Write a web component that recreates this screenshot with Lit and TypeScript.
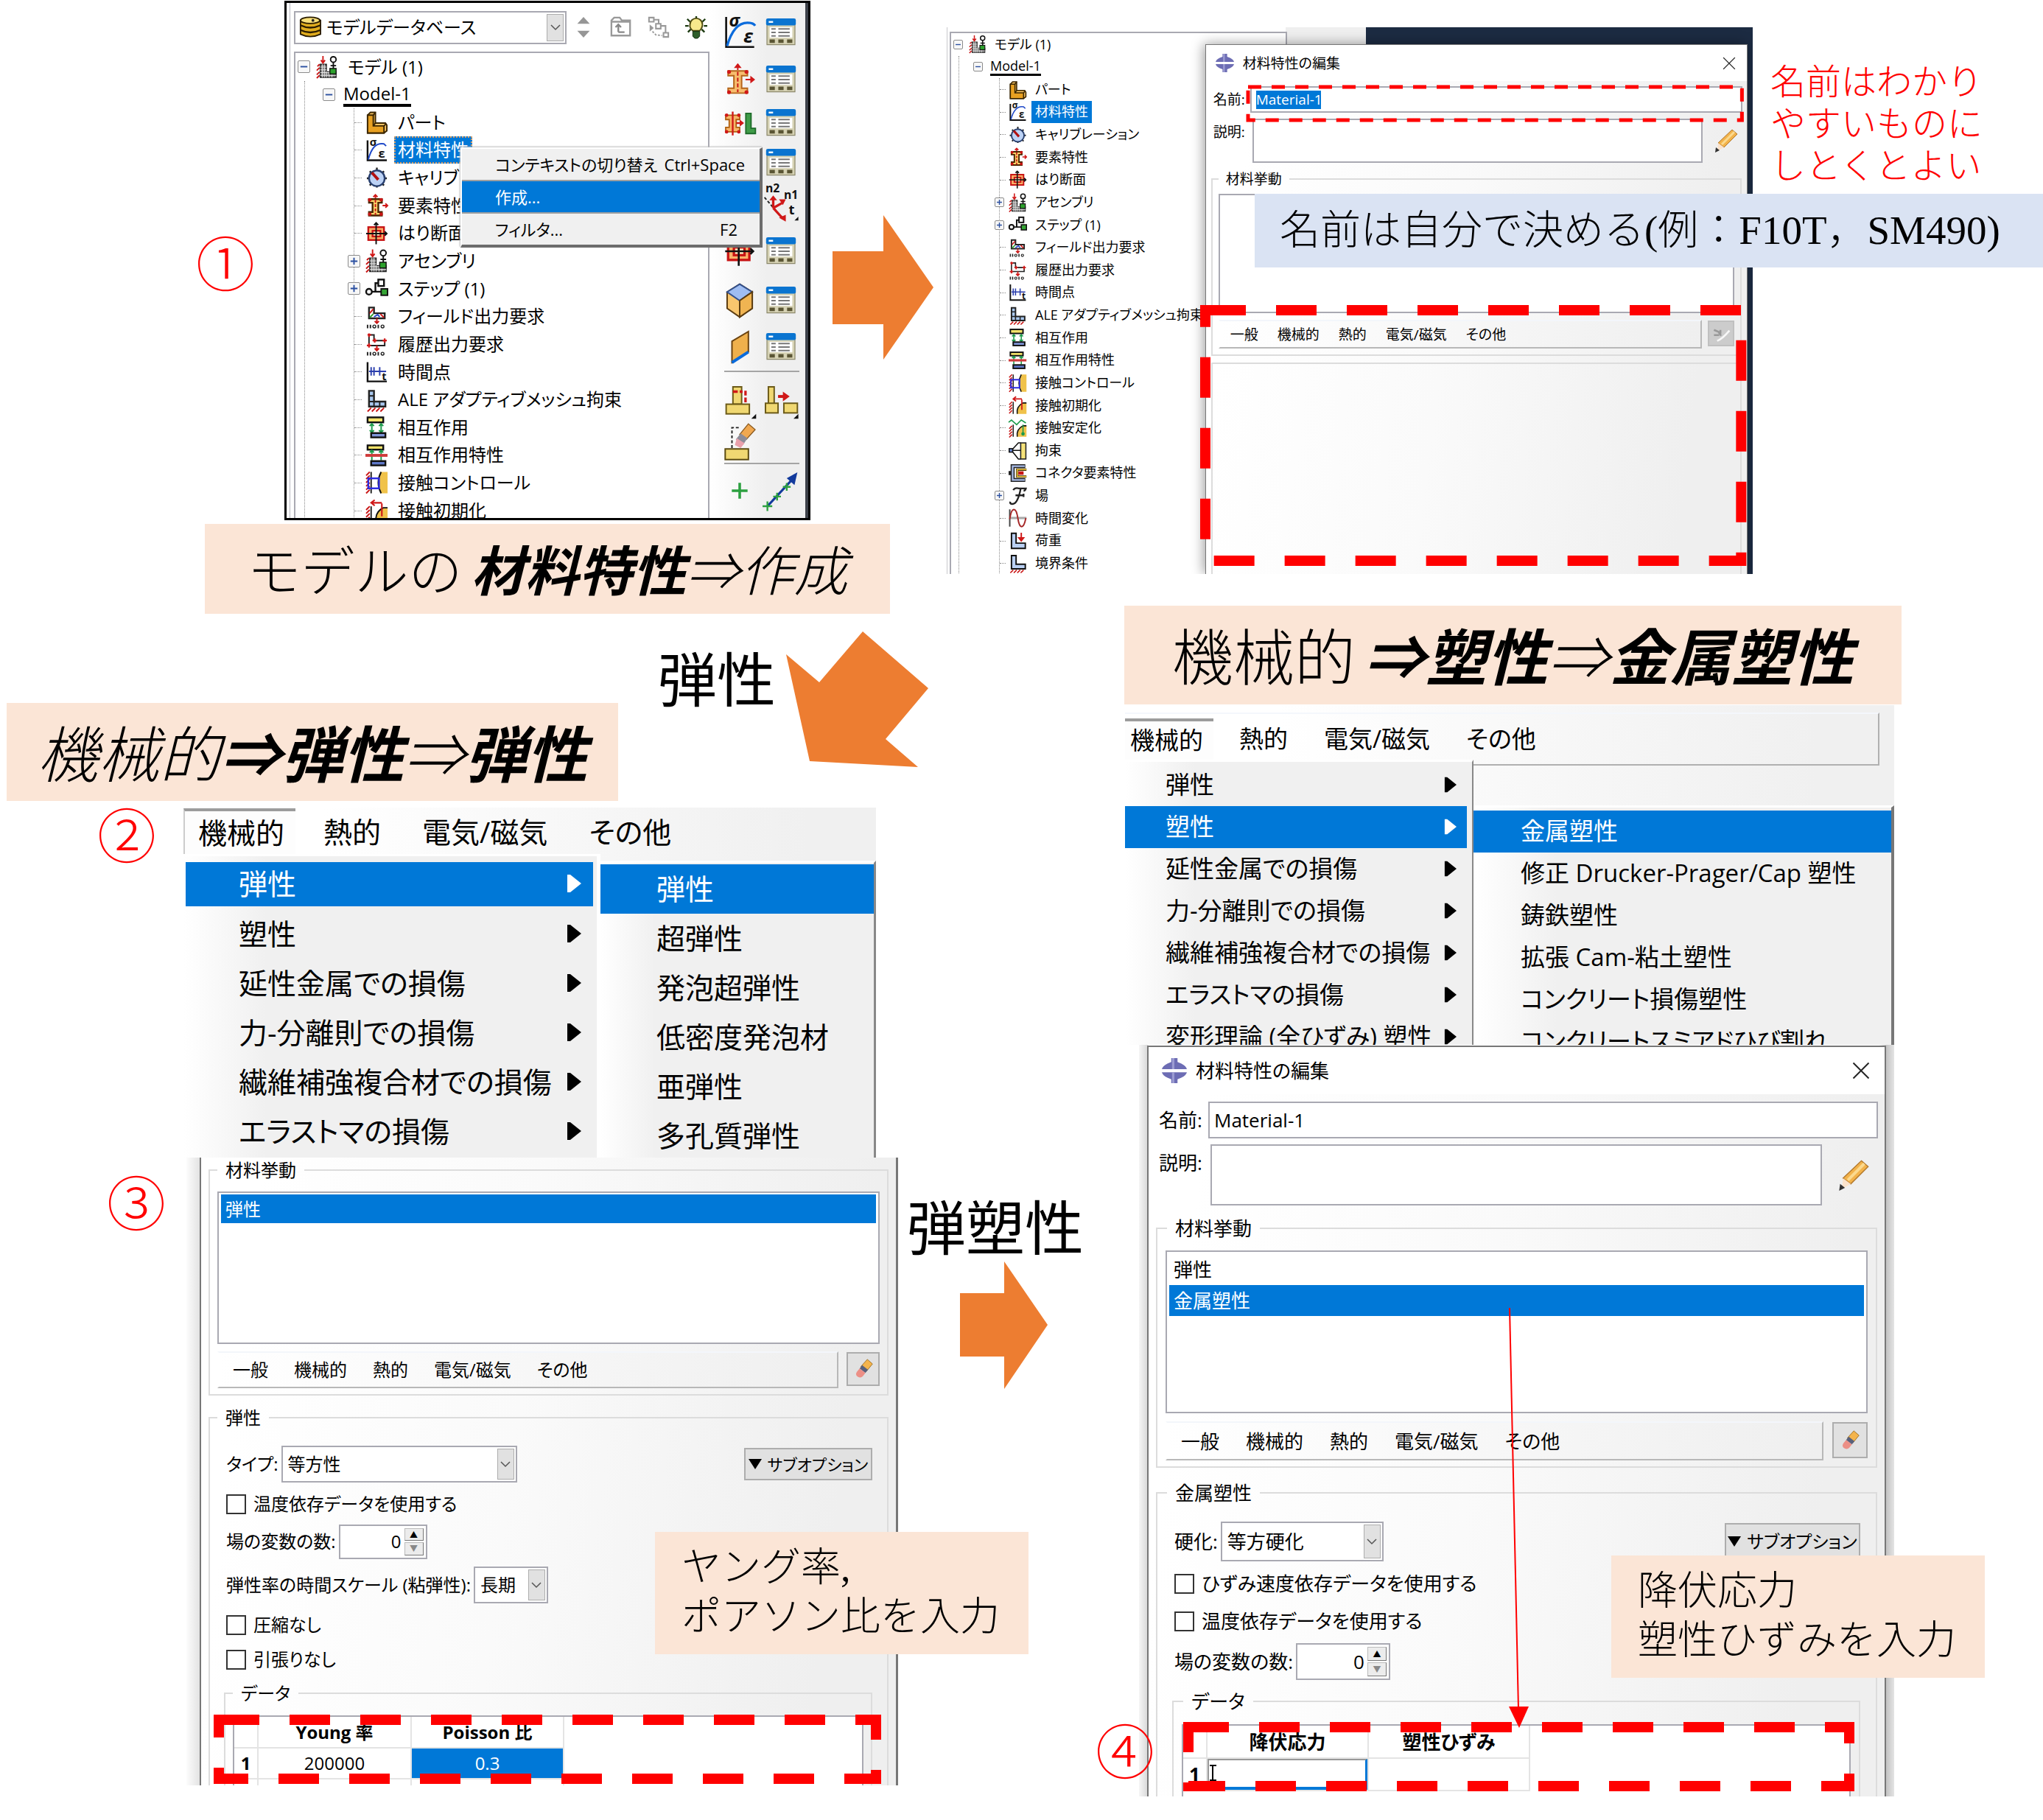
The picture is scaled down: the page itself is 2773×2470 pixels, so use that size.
import { LitElement, html, svg, css, nothing, TemplateResult } from "lit";
import { customElement } from "lit/decorators.js";
import { classMap } from "lit/directives/class-map.js";

type Drawing = TemplateResult<2>;

const hatch = (x: number, y0: number, y1: number): Drawing => {
  const out: Drawing[] = [];
  for (let y = y0; y < y1; y += 5) {
    out.push(svg`<path d="M${x} ${y + 5}l5 -5" stroke="#c81414" stroke-width="2"/>`);
  }
  return svg`${out}`;
};

const bits = svg`<path d="M3 27v5M7 27v5M18 27v5" stroke="#222" stroke-width="2"/>
  <circle cx="12.500" cy="29.500" r="2" fill="none" stroke="#222" stroke-width="1.500"/>
  <circle cx="24" cy="29.500" r="2" fill="none" stroke="#222" stroke-width="1.500"/>`;

const DRAWINGS: Record<string, Drawing> = {
  model: svg`
    <path d="M6 12h9v11h14v8H6z" fill="#777" stroke="#222" stroke-width="1.500"/>
    <path d="M9 12v19M12 12v19M15 22v9M19 23v8M23 23v8M6 16h9M6 20h9M6 24h23M6 28h23" stroke="#e8e8e8" stroke-width="1"/>
    <path d="M2 15l3 -3M1 21l4 -4M1 27l4 -4M1 32l4 -4" stroke="#c81414" stroke-width="2"/>
    <path d="M10 0v9M7 6l3 4l3 -4" fill="none" stroke="#d01818" stroke-width="2"/>
    <circle cx="25" cy="5" r="4" fill="#fff" stroke="#111" stroke-width="2"/>
    <path d="M25 9v9M21 14h8" stroke="#111" stroke-width="2"/>
    <rect x="20" y="18" width="9" height="8" fill="#2ca02c" stroke="#111" stroke-width="1.500"/>`,
  part: svg`
    <path d="M3 6l4 -4h7v15h14l2 3v8l-4 3H3z" fill="#f6c463" stroke="#3a2500" stroke-width="2"/>
    <path d="M3 6h8v15h15v10H3z" fill="#e8a021" stroke="#3a2500" stroke-width="2"/>
    <path d="M11 6l3 -4M11 21l3 -4M26 21l3 -3" stroke="#3a2500" stroke-width="2"/>`,
  material: svg`
    <path d="M3 2v28h27" fill="none" stroke="#111" stroke-width="2.500"/>
    <path d="M4 29C8 14 14 5 26 7l3 3" fill="none" stroke="#1e48c8" stroke-width="2"/>
    <text x="6" y="10" font-size="15" font-weight="700" fill="#111">σ</text>
    <text x="18" y="26" font-size="17" font-weight="700" fill="#111">ε</text>`,
  calibration: svg`
    <path d="M16 2v28M2 17h28M6 7l20 20M26 7L6 27" stroke="#222" stroke-width="2.500"/>
    <circle cx="16" cy="17" r="11" fill="#bcd2f5" stroke="#29406f" stroke-width="2.500"/>
    <path d="M9 9l9 10" stroke="#b01010" stroke-width="4"/>`,
  section: svg`
    <path d="M14 1v6M11 4l3 -3l3 3M24 16h7M28 13l3 3l-3 3" fill="none" stroke="#d01818" stroke-width="2"/>
    <path d="M5 7h18v5h-5v13h5v5H5v-5h5V12H5z" fill="#fbd36a" stroke="#4a2500" stroke-width="2.500"/>
    <path d="M14 8v21" stroke="#c81414" stroke-width="2" stroke-dasharray="4 2"/>
    <circle cx="6" cy="8" r="2.500" fill="#c81414"/><circle cx="22" cy="8" r="2.500" fill="#c81414"/>
    <circle cx="6" cy="28" r="2.500" fill="#c81414"/><circle cx="22" cy="28" r="2.500" fill="#c81414"/>`,
  bigSection: svg`
    <path d="M14 0v6M22 16h7" fill="none" stroke="#d01818" stroke-width="1.500"/><path d="M10 4l4 -5l4 5zM27 12l5 4l-5 4z" fill="#d01818"/>
    <path d="M4 7h20v5h-6v13h6v5H4v-5h6V12H4z" fill="#f7bd6e" stroke="#b5651a" stroke-width="1.500"/>
    <path d="M14 8v21" stroke="#c81414" stroke-width="1.500" stroke-dasharray="4 2"/>
    <circle cx="5" cy="8" r="2" fill="#d01818"/><circle cx="23" cy="8" r="2" fill="#d01818"/>
    <circle cx="5" cy="29" r="2" fill="#d01818"/><circle cx="23" cy="29" r="2" fill="#d01818"/>`,
  profile: svg`
    <rect x="4" y="7" width="22" height="18" fill="#fbb26a" stroke="#c81414" stroke-width="2.500"/>
    <rect x="10" y="12" width="11" height="8" fill="#fff3c8" stroke="#c81414" stroke-width="2.500"/>
    <path d="M15 1v30M1 16h29M12 4l3 -3l3 3M27 13l3 3l-3 3" fill="none" stroke="#111" stroke-width="2"/>`,
  step: svg`
    <rect x="18" y="3" width="8" height="9" fill="#fff" stroke="#111" stroke-width="2.500"/>
    <circle cx="5" cy="20" r="4" fill="#fff" stroke="#111" stroke-width="2.500"/>
    <path d="M9 20h13M14 20V8h4" fill="none" stroke="#111" stroke-width="2.500"/>
    <rect x="22" y="16" width="9" height="9" fill="#35a535" stroke="#111" stroke-width="2"/>`,
  field: svg`
    <path d="M5 3h7v8h15v7H5z" fill="#fff" stroke="#222" stroke-width="2.500"/>
    <path d="M6 11l5 -6M21 12l5 5" stroke="#d01818" stroke-width="2"/>
    <path d="M6 17l5 -5" stroke="#2ca02c" stroke-width="2"/><path d="M12 16l5 -3l3 3" fill="none" stroke="#2244cc" stroke-width="2"/>
    <path d="M16 18v7M13 22l3 3l3 -3" fill="none" stroke="#c81414" stroke-width="2"/>${bits}`,
  history: svg`
    <path d="M5 3h7v8h15v7H5z" fill="#fff" stroke="#222" stroke-width="2"/>
    <path d="M3 3h5M5 1v5M2 18h6M5 15v6M10 11h6M13 8v6M24 11h6M27 8v6M16 18v7M13 22l3 3l3 -3" fill="none" stroke="#d01818" stroke-width="2.200"/>${bits}`,
  timepoint: svg`
    <path d="M3 2v27h27" fill="none" stroke="#111" stroke-width="2.500"/>
    <path d="M5 15h24M8 9v12M12 9v12M20 9v12" stroke="#2b3fae" stroke-width="2"/>
    <text x="23" y="27" font-size="15" font-weight="700" fill="#111">t</text>`,
  ale: svg`
    <path d="M5 3h7v15h16v7H5z" fill="#a9c8ef" stroke="#222" stroke-width="2.500"/>
    <path d="M5 10h7M5 18h7v7M20 18v7" fill="none" stroke="#222" stroke-width="2"/>
    <path d="M3 32l5 -5M9 32l5 -5M15 32l5 -5M21 32l5 -5" stroke="#c81414" stroke-width="2"/>`,
  interaction: svg`
    <rect x="3" y="2" width="22" height="7" fill="#f4e36a" stroke="#111" stroke-width="2.500"/>
    <path d="M9 10v13M22 10v13M6 14l3 -3l3 3M6 20l3 3l3 -3M19 14l3 -3l3 3M19 20l3 3l3 -3" fill="none" stroke="#1b9a4a" stroke-width="2"/>
    <rect x="8" y="24" width="20" height="6" fill="#7f95d8" stroke="#111" stroke-width="2.500"/>`,
  interactionProp: svg`
    <rect x="3" y="2" width="22" height="6" fill="#f4e36a" stroke="#111" stroke-width="2.500"/>
    <path d="M9 9v14M22 9v14M6 12l3 -3l3 3M19 12l3 -3l3 3" fill="none" stroke="#1b9a4a" stroke-width="2"/>
    <path d="M0 16h31" stroke="#cf3a3a" stroke-width="4"/>
    <rect x="8" y="24" width="20" height="6" fill="#5f78c8" stroke="#111" stroke-width="2.500"/>`,
  contactControl: svg`
    ${hatch(1, 1, 30)}<path d="M8 1v30" stroke="#222" stroke-width="2"/>
    <path d="M31 1h-9q-7 15 0 30h9z" fill="#f0c24a"/><path d="M22 1q-8 15 0 30" fill="none" stroke="#111" stroke-width="2"/>
    <rect x="4" y="10" width="15" height="14" fill="none" stroke="#2a2ae0" stroke-width="2.500"/>`,
  contactInit: svg`
    ${hatch(1, 10, 30)}<path d="M8 10v21" stroke="#222" stroke-width="2"/>
    <path d="M31 12h-9q-8 8 -8 19h17z" fill="#f0c24a"/><path d="M31 12h-6q-12 6 -10 19" fill="none" stroke="#111" stroke-width="2"/>
    <path d="M23 6v18M23 5H9M13 1L8 5l5 4" fill="none" stroke="#d01818" stroke-width="2.200"/>`,
  contactStab: svg`
    ${hatch(1, 12, 30)}<path d="M8 10v21" stroke="#222" stroke-width="2"/>
    <path d="M31 12h-9q-8 8 -8 19h17z" fill="#f0c24a"/><path d="M31 12h-6q-12 6 -10 19" fill="none" stroke="#111" stroke-width="2"/>
    <path d="M0 6l5 -4l9 8l8 -8l8 5M25 10v17" fill="none" stroke="#1b9a4a" stroke-width="2"/><circle cx="25" cy="26" r="3" fill="#1b9a4a"/>`,
  constraint: svg`
    <rect x="21" y="2" width="9" height="28" fill="#f6e27a" stroke="#222" stroke-width="2"/>
    <path d="M21 2h-4L5 15l12 15h4M6 15h15" fill="none" stroke="#111" stroke-width="2"/>
    <rect x="1" y="12" width="6" height="6" fill="#6f8fe0" stroke="#111" stroke-width="2"/>`,
  connector: svg`
    <path d="M29 4H7v24h22M8 16H0" fill="none" stroke="#222" stroke-width="7"/>
    <path d="M28 4H7v24h21" fill="none" stroke="#a9bce8" stroke-width="3"/>
    <path d="M31 10H15v12h16" fill="none" stroke="#3a2b00" stroke-width="4"/><path d="M31 10H15v12h16" fill="none" stroke="#f2c53a" stroke-width="2"/>
    <rect x="17" y="13" width="9" height="6" fill="#c81414"/>`,
  fieldF: svg`<path d="M8 6q3 -5 10 -3l12 0q-1 4 -4 4M21 3q-2 12 -6 20q-4 8 -10 7q-3 -1 -2 -4M12 15h14M26 12v6" fill="none" stroke="#222" stroke-width="3"/>`,
  amplitude: svg`
    <path d="M2 1v30" stroke="#444" stroke-width="2.500"/><path d="M2 16h29" stroke="#aaa" stroke-width="4"/>
    <path d="M2 18C5 -4 13 -4 16 16s10 20 14 0" fill="none" stroke="#a52626" stroke-width="2.500"/>`,
  load: svg`
    <path d="M5 3h8v17h16v9H5z" fill="#b9d0f3" stroke="#111" stroke-width="2.500"/>
    <path d="M22 2v14M18 11l4 5l4 -5z" fill="#d01818" stroke="#d01818" stroke-width="2.500"/>`,
  boundary: svg`
    <path d="M5 2h8v15h16v8H5z" fill="#b9d0f3" stroke="#111" stroke-width="2.500"/>
    <path d="M3 32l5 -5M9 32l5 -5M15 32l5 -5M21 32l5 -5" stroke="#c81414" stroke-width="2"/>`,
  database: svg`
    <path d="M2 6q14 -7 29 0v20q-15 7 -29 0z" fill="#e0ac1e" stroke="#2a1c00" stroke-width="2"/>
    <ellipse cx="16" cy="6" rx="14" ry="4.500" fill="#f7df7a" stroke="#2a1c00" stroke-width="2"/>
    <path d="M2 13q14 7 29 0M2 20q14 7 29 0" fill="none" stroke="#2a1c00" stroke-width="2.500"/><circle cx="20" cy="6" r="2" fill="#222"/>`,
  updown: svg`<path d="M16 1l9 10H7zM16 31l9 -10H7z" fill="#969696"/>`,
  folder: svg`<path d="M2 10V6l4 -4h8l3 4h12v22H2zM2 8h27" fill="none" stroke="#999" stroke-width="2.500"/>
    <path d="M12 23V13M8 16l4 -4l4 4M12 23h9" fill="none" stroke="#888" stroke-width="2.500"/>`,
  branch: svg`<path d="M2 2h7v6H2zM12 11h7v7h-7zM23 24h7v6h-7zM9 5h7v6M19 14h7v10" fill="none" stroke="#999" stroke-width="2.200"/>
    <path d="M3 12v10l6 -5z" fill="#999"/><path d="M7 22l5 5l9 1" fill="none" stroke="#999" stroke-width="2" stroke-dasharray="3 2"/>`,
  bulb: svg`<path d="M16 0v4M3 4l4 4M29 4l-4 4M0 14h5M27 14h5M4 23l4 -4M28 23l-4 -4" stroke="#1d3b12" stroke-width="2.500"/>
    <path d="M11 21q-5 -4 -4 -9a9 9 0 0 1 18 0q0 5 -4 9z" fill="#f7e98c" stroke="#4d4a10" stroke-width="2"/>
    <path d="M11 22h10v7l-3 3h-4l-3 -3z" fill="#2f5f2c" stroke="#122c10" stroke-width="1"/>`,
  manager: svg`<rect x="0" y="2" width="32" height="28" fill="#d6d2b4" stroke="#8a8668" stroke-width="1"/>
    <rect x="-1" y="0" width="34" height="8" rx="2" fill="#0a74d0"/><rect x="2" y="3" width="5" height="2" fill="#fff"/>
    <rect x="3" y="10" width="26" height="12" fill="#fff"/>
    <path d="M5 12h5M5 16h5M5 20h5M13 12h13M13 16h13M13 20h13" stroke="#777" stroke-width="1.500"/>
    <path d="M3 26h6M13 26h6M23 26h6" stroke="#5a5534" stroke-width="4"/>`,
  bigMaterial: svg`<path d="M2 0v31h29" fill="none" stroke="#111" stroke-width="2"/>
    <path d="M3 30C7 16 14 6 24 6q6 0 8 3" fill="none" stroke="#0a6bdc" stroke-width="2.500"/>
    <text x="5" y="10" font-size="18" font-style="italic" font-weight="700" fill="#111">σ</text>
    <text x="20" y="27" font-size="19" font-style="italic" font-weight="700" fill="#111">ε</text>`,
  beamPair: svg`<path d="M0 7h16v5h-4v9h4v5H0v-5h4v-9H0z" fill="#f7b569" stroke="#b06010" stroke-width="1.500"/>
    <path d="M8 3v27M12 16h6" stroke="#d01818" stroke-width="2"/><path d="M16 12l5 4l-5 4z" fill="#d01818"/>
    <circle cx="1" cy="7" r="2" fill="#d01818"/><circle cx="15" cy="7" r="2" fill="#d01818"/><circle cx="1" cy="26" r="2" fill="#d01818"/><circle cx="15" cy="26" r="2" fill="#d01818"/>
    <path d="M23 5h6v17h5v6H23z" fill="#3f9c48" stroke="#1d6a28" stroke-width="1.500"/>`,
  axes: svg`<path d="M-1 9l18 21" stroke="#222" stroke-width="1.500" stroke-dasharray="3 2"/>
    <path d="M8 20V10M8 20l9 -5M8 20l10 11" stroke="#d01818" stroke-width="2.500"/>
    <path d="M4 12l4 -5l4 5zM14 11l7 0l-3 6zM14 30l7 -3v7z" fill="#d01818"/>
    <text x="0" y="4" font-size="12" font-weight="700" fill="#111">n2</text><text x="19" y="11" font-size="12" font-weight="700" fill="#111">n1</text>
    <text x="24" y="27" font-size="14" font-weight="700" fill="#111">t</text><path d="M34 29v4h-4z" fill="#111"/>`,
  solid: svg`<path d="M16 -1l13 8v17l-13 9l-13 -9V7z" fill="#f8c66e" stroke="#5a3b10" stroke-width="1.500"/>
    <path d="M16 -1l13 8l-13 9L3 7z" fill="#9fbdf2" stroke="#33508c" stroke-width="1.500"/><path d="M16 16v17l13 -9V7z" fill="#f0b452" stroke="#5a3b10" stroke-width="1.500"/>`,
  shell: svg`<path d="M8 10L25 0v21L8 32z" fill="#efb04c" stroke="#6b4310" stroke-width="1.500"/><path d="M8 32l17 -11" stroke="#0a6bdc" stroke-width="3"/>`,
  partition: svg`<path d="M9 3h9v18H9z" fill="#f0d872" stroke="#6b5a18" stroke-width="1.500"/><rect x="2" y="21" width="24" height="10" fill="#f0d872" stroke="#6b5a18" stroke-width="1.500"/>
    <path d="M9 8h10M22 7v13" stroke="#d01818" stroke-width="2.500" stroke-dasharray="5 2"/><path d="M33 31v5h-5z" fill="#111"/>`,
  split: svg`<path d="M3 3h6v18H3z" fill="#f0d872" stroke="#6b5a18" stroke-width="1.500"/><rect x="0" y="20" width="13" height="10" fill="#f0d872" stroke="#6b5a18" stroke-width="1.500"/>
    <rect x="19" y="20" width="14" height="10" fill="#f0d872" stroke="#6b5a18" stroke-width="1.500"/><path d="M13 13h7" stroke="#d01818" stroke-width="3"/><path d="M18 8l7 5l-7 5z" fill="#d01818"/><path d="M34 31v5h-5z" fill="#111"/>`,
  erasePart: svg`<rect x="1" y="20" width="24" height="11" fill="#f0d872" stroke="#5a4a10" stroke-width="1.500"/><path d="M8 19V-2h8" fill="none" stroke="#222" stroke-width="1.500" stroke-dasharray="3 2"/>
    <path d="M25 -6l7 6l-9 10l-7 -5z" fill="#f0a850" stroke="#8a5a20" stroke-width="1"/><path d="M17 4l7 5l-4 6l-8 -5z" fill="#8c8c98"/><path d="M13 9l8 5l-4 5l-6 -3z" fill="#e9a0ac"/>`,
  plus: svg`<path d="M16 7v18M7 16h18" stroke="#2ca040" stroke-width="3"/>`,
  line: svg`<path d="M2 32L28 4" stroke="#123a9c" stroke-width="2.500"/><path d="M22 3l11 -6l-3 13z" fill="#123a9c"/>
    <path d="M-3 32h10M2 27v10M8 22h8M12 18v8M18 12h8M22 8v8" stroke="#2ca040" stroke-width="1.800"/>`,
  app: svg`<path d="M12 0h8v5l5 2q6 3 7 7H0q1 -4 7 -7l5 -2z" fill="#6d6db4"/><path d="M12 32h8v-5l5 -2q6 -3 7 -7H0q1 4 7 7l5 2z" fill="#6d6db4"/>
    <path d="M13 0h3v14h-3zM13 18h3v14h-3z" fill="#9c9cd2"/>`,
  pencil: svg`<path d="M24 1l7 6L13 25l-8 -6z" fill="#f2b24a" stroke="#b0762a" stroke-width="1"/><path d="M27 4L10 21" stroke="#fbd98e" stroke-width="3"/>
    <path d="M5 19l8 6l-9 5z" fill="#fbe3cc"/><path d="M2 25l5 4l-6 3z" fill="#333"/>`,
  eraser: svg`<path d="M22 1l8 7l-9 11l-9 -7z" fill="#f4b44c" stroke="#9a6a1c" stroke-width="1"/><path d="M14 10l9 7l-4 5l-9 -7z" fill="#59617c"/><path d="M10 15l9 7l-4 5q-4 4 -9 0q-3 -3 0 -7z" fill="#ec8f86"/>`,
  eraserOff: svg`<path d="M5 10l7 3l4 6M5 18h8M15 10v6" fill="none" stroke="#999" stroke-width="3"/><path d="M10 27q8 -3 19 -16" fill="none" stroke="#f8f8f8" stroke-width="3"/>`,
  close: svg`<path d="M2 2l28 28M30 2L2 30" stroke="#222" stroke-width="2.500"/>`,
  chevron: svg`<path d="M4 10l12 12l12 -12" fill="none" stroke="#555" stroke-width="3"/>`,
};

const icon = (name: string, cls = "icon") =>
  html`<svg class=${cls} viewBox="0 0 32 32" aria-hidden="true">${DRAWINGS[name]}</svg>`;

interface TreeItem { label: string; icon: string; expandable?: boolean; selected?: boolean }

const CHILDREN: TreeItem[] = [
  { label: "パート", icon: "part" },
  { label: "材料特性", icon: "material", selected: true },
  { label: "キャリブレーション", icon: "calibration" },
  { label: "要素特性", icon: "section" },
  { label: "はり断面", icon: "profile" },
  { label: "アセンブリ", icon: "model", expandable: true },
  { label: "ステップ (1)", icon: "step", expandable: true },
  { label: "フィールド出力要求", icon: "field" },
  { label: "履歴出力要求", icon: "history" },
  { label: "時間点", icon: "timepoint" },
  { label: "ALE アダプティブメッシュ拘束", icon: "ale" },
  { label: "相互作用", icon: "interaction" },
  { label: "相互作用特性", icon: "interactionProp" },
  { label: "接触コントロール", icon: "contactControl" },
  { label: "接触初期化", icon: "contactInit" },
  { label: "接触安定化", icon: "contactStab" },
  { label: "拘束", icon: "constraint" },
  { label: "コネクタ要素特性", icon: "connector" },
  { label: "場", icon: "fieldF", expandable: true },
  { label: "時間変化", icon: "amplitude" },
  { label: "荷重", icon: "load" },
  { label: "境界条件", icon: "boundary" },
];

const TOOLS: string[][] = [
  ["bigMaterial", "manager"], ["bigSection", "manager"], ["beamPair", "manager"], ["", "manager"],
  ["", "axes"], ["profile", "manager"], ["solid", "manager"], ["shell", "manager"],
];

const CATEGORIES = ["一般", "機械的", "熱的", "電気/磁気", "その他"];

@customElement("app-root")
export class AppRoot extends LitElement {
  static styles = css`
    :host { display: block; background: #fff; color: #000; }
    * { box-sizing: border-box; }
    ul { list-style: none; margin: 0; padding: 0; }
    figure { margin: 0; }
    button, input, select, textarea { font: inherit; color: inherit; margin: 0; border-radius: 0; }
    button { border: 0; background: none; padding: 0; }
    svg { display: block; flex: none; }

    .board { display: grid; grid-template-columns: 1285fr 1488fr; min-height: 2470px; position: relative; overflow: hidden; }
    .col { display: flex; flex-direction: column; position: relative; min-width: 0; }
    .shot {
      font-family: "Open Sans", "Noto Sans CJK JP", sans-serif;
      font-feature-settings: "palt";
      white-space: nowrap;
      position: relative; font-size: var(--fs); line-height: var(--lh);
    }
    .clip { overflow: hidden; }

    /* captions and notes */
    .mincho { font-family: "Liberation Serif", "Noto Sans CJK JP", serif; font-weight: 300; white-space: nowrap; }
    .caption { background: #fbe5d6; margin: 0; display: flex; align-items: center; justify-content: center; font-family: "Noto Sans CJK JP", sans-serif; font-weight: 300; padding-bottom: 4px; }
    .caption em { font-style: italic; }
    .caption strong { font-style: italic; font-weight: 700; }
    .caption span { margin-right: 12px; }
    .note { position: absolute; margin: 0; background: #fbe5d6; padding: 16px 36px; font-size: 54px; line-height: 67px; }
    .blue { position: absolute; left: calc(100% * 418 / 1488); right: 0; top: 263px; height: 100px; margin: 0; padding: 0 34px; background: #dae3f3; font-size: 55px; line-height: 100px; z-index: 3; }
    .red { position: absolute; left: calc(100% * 1118 / 1488); top: 83px; margin: 0; color: #f00; font-size: 48px; line-height: 57px; }
    .label { position: absolute; margin: 0; font-family: "Noto Sans CJK JP", sans-serif; font-size: 80px; line-height: 96px; white-space: nowrap; }
    .num { position: absolute; color: #f00; font-family: "Noto Sans CJK JP", sans-serif; font-weight: 300; font-size: 80px; line-height: 80px; z-index: 4; }
    .arrow { position: absolute; fill: #ed7d31; }
    .dash { position: absolute; overflow: visible; pointer-events: none; z-index: 2; fill: none; stroke: #f00; stroke-width: 14px; stroke-dasharray: 55 41; }
    .dash.thin { stroke-width: 5px; stroke-dasharray: 18 14; }

    /* model database window */
    .fig1 { --fs: 24px; --lh: 30px; --row: calc(640px / 17); --exp: 17px; --ico: 31px; --line1: 12px; --line2: 66px; --slot: 15px; --conn: 10px; --gap: 8px; --pad1: 24px; --gap1: 6px;
      margin: 1px 0 0 calc(100% * 386 / 1285); width: calc(100% * 714 / 1285); height: 705px; border: 3px solid #000; display: flex; background: #fff; }
    .browser { flex: 1; min-width: 0; margin-left: 4px; border-left: 1px solid #b5b5bd; padding-left: 5px; display: flex; flex-direction: column; }
    .tools { display: flex; align-items: center; height: 66px; padding: 0 6px 0 0; }
    .tools .combo { width: 370px; height: 45px; }
    .tools .icon { width: 30px; height: 32px; }
    .tools .tool { margin-left: 21px; }
    .tools .tool:first-of-type { margin-left: 8px; }
    .tree { flex: 1; overflow: hidden; border: 2px solid #a9a9b2; border-bottom: 0; background: #fff; }
    .row { display: flex; align-items: center; height: var(--row); }
    .row .icon { width: var(--ico); height: calc(var(--ico) + 1px); margin-right: var(--gap); overflow: visible; }
    .root { padding-left: 3px; }
    .root .exp { margin-right: 8px; }
    .root .icon { width: calc(var(--ico) - 1px); }
    .lvl1 { margin-left: var(--line1); border-left: 1px dotted #888; }
    .lvl1 > li > .row { padding-left: var(--pad1); }
    .lvl1 > li > .row .exp { margin-right: var(--gap1); }
    .lvl1 .under { border-bottom: 4px solid #000; padding: 0; margin-left: 5px; line-height: calc(var(--lh) - 1px); }
    .lvl2 { margin-left: var(--line2); border-left: 1px dotted #888; }
    .conn { width: var(--conn); margin-right: calc(var(--slot) - var(--conn)); border-top: 1px dotted #888; }
    .exp { width: var(--exp); height: var(--exp); flex: none; border: 1px solid #8c8c8c; border-radius: 2px; background: #f7f7f7; display: grid; place-items: center; }
    .exp svg { width: 100%; height: 100%; }
    .lvl2 .exp { margin-left: calc(0px - (var(--exp) + 1px) / 2); margin-right: calc(var(--slot) - (var(--exp) - 1px) / 2); }
    .txt { padding: 0 5px; line-height: calc(var(--row) - 1px); }
    .sel { background: #0078d7; color: #fff; }
    .fig1 .txt.sel { outline: 2px dotted #d9a066; outline-offset: -2px; }
    .toolbox { width: 134px; flex: none; background: linear-gradient(90deg, #fff, #efefef 60%); border-right: 4px solid #3c4048; padding: 9px 8px 0 20px; display: grid; grid-template-columns: 56px 1fr; grid-template-rows: 62px 66px 52px 56px 56px 72px 62px 64px 76px 49px 74px; place-items: center start; }
    .toolbox .icon { width: 42px; height: 38px; overflow: visible; }
    .toolbox .tall { height: 44px; }
    .toolbox .rule { border-top: 2px solid #a5a5a5; width: 100%; height: 100%; grid-column: 1 / 3; display: grid; grid-template-columns: 56px 1fr; place-items: center start; }
    .popup { position: absolute; left: 236px; top: 196px; width: 410px; background: #f0f0f0; border: 2px solid #fff; border-right: 4px solid #6c6c6c; border-bottom: 4px solid #6c6c6c; box-shadow: -1px -1px 2px #bbb; font-size: 22px; }
    .popup li + li { border-top: 2px solid #a0a0a0; }
    .popup button { display: flex; justify-content: space-between; width: 100%; height: 42px; align-items: center; padding: 0 20px 0 45px; text-align: left; }
    .popup .key { padding-right: 10px; }

    /* combo, spinner, check boxes */
    .combo { display: flex; align-items: stretch; background: #fff; border: 2px solid #a9a9b2; height: var(--ctl); flex: none; }
    .combo .icon { align-self: center; margin-left: 5px; }
    .combo select { flex: 1; min-width: 0; appearance: none; border: 0; background: none; padding: 0 0 0 7px; font-feature-settings: inherit; outline: none; }
    .chev { width: 23px; margin: 2px; border: 1px solid #adadad; background: #e1e1e1; display: grid; place-items: center; pointer-events: none; }
    .chev svg { width: 16px; height: 16px; }
    .spin { display: flex; width: 120px; height: var(--spin); border: 2px solid #a9a9b2; background: #fff; padding: 3px; }
    .spin input { flex: 1; min-width: 0; border: 0; background: none; text-align: right; padding: 0 4px 0 0; appearance: textfield; outline: none; }
    .spin input::-webkit-inner-spin-button { appearance: none; margin: 0; }
    .spin div { width: 26px; display: grid; grid-template-rows: 1fr 1fr; gap: 2px; }
    .spin button { background: #ececec; border: 1px solid #bbb; border-right-color: #777; border-bottom-color: #777; display: grid; place-items: center; font-size: 11px; line-height: 11px; }
    .spin button + button { color: #888; }
    .line { display: flex; align-items: center; gap: 4px; }
    .line.tick { gap: 10px; }
    .line input[type="checkbox"] { appearance: none; width: 27px; height: 27px; border: 2px solid #333; background: #fff; flex: none; }
    .sub { margin-left: auto; height: 44px; width: 174px; border: 2px solid #adadad; background: #e1e1e1; display: flex; align-items: center; justify-content: center; gap: 8px; font-size: 22px; }
    .tri { width: 18px; height: 14px; }

    /* dialogs */
    .dlg { background: linear-gradient(97deg, #fff 8%, #fafafa 45%, #efefef 88%); border: 2px solid #777; display: flex; flex-direction: column; }
    .title { display: flex; align-items: center; background: #fff; height: var(--th); padding: 0 var(--tp) 0 calc(var(--tp) - 2px); gap: 12px; margin: 0; font-weight: 400; font-size: inherit; }
    .title .icon { width: var(--ti); height: var(--ti); }
    .title .close { margin-left: auto; width: var(--tx); height: var(--tx); }
    .title .close svg { width: 100%; height: 100%; }
    .form { display: grid; grid-template-columns: var(--lw) 1fr; padding: var(--fp) 9px 0 var(--lx); row-gap: 8px; }
    .form label { line-height: var(--ctl); }
    .box { display: flex; align-items: center; height: var(--ctl); border: 2px solid #a9a9b2; background: #fff; padding: 0 6px; }
    .box input { border: 0; padding: 0; outline: none; background: none; width: 100%; }
    .box .marked { width: 88px; background: #0078d7; color: #fff; line-height: 24px; height: 25px; }
    .desc { display: flex; }
    .desc textarea { flex: 1; height: var(--ta); border: 2px solid #a9a9b2; background: #fff; resize: none; display: block; margin-left: 3px; }
    .desc button { width: var(--pw); display: grid; place-items: center; padding-left: 10px; }
    .desc .icon { width: var(--pi); height: var(--pi); }
    fieldset { border: 2px solid #dcdcdc; margin: 0 10px; padding: 0 var(--fx) 8px; min-width: 0; }
    legend { padding: 0 11px; margin-left: var(--lg); line-height: var(--lh); }
    .list { border: 2px solid #a9a9b2; background: #fff; padding: 2px 3px; }
    .list li { line-height: var(--li); padding: 0 6px; }
    .bar { display: flex; gap: var(--bg); }
    .bar .menus { flex: 1; display: flex; gap: var(--mg); padding: 0 19px; border: 2px solid #b8b8b8; border-top-color: #f3f6fb; border-left-color: #fff; background: linear-gradient(90deg, #fff, #efefef); align-items: center; height: var(--bh); }
    .bar .wipe { width: var(--bw); height: calc(var(--bh) - 4px); border: 2px solid #adadad; background: #e1e1e1; display: grid; place-items: center; margin-top: 1px; }
    .bar .wipe .icon { width: 28px; height: 28px; }
    table { border-collapse: collapse; table-layout: fixed; width: auto; }
    th, td { border-right: 2px solid #e4e4e4; border-bottom: 2px solid #e4e4e4; padding: 0; text-align: center; font-weight: 400; }
    th { font-weight: 700; }
    .grid { border: 2px solid #a9a9b2; border-bottom: 0; background: #fff; }

    .fig2 { --fs: 19px; --lh: 24px; --row: calc(735px / 24); --exp: 13px; --ico: 25px; --line1: 10px; --line2: 54px; --slot: 12px; --conn: 8px; --gap: 6px; --pad1: 19px; --gap1: 5px;
      margin-top: 37px; width: calc(100% * 1094 / 1488); height: 742px; border-left: 1px solid #c8c8cc; padding: 6px 0 0 3px; background: linear-gradient(90deg, #fff 42%, #efefef 42%, #efefef 52%, #1c2b42 52%); }
    .fig2 .tree { width: calc(100% * 458 / 1090); height: 736px; font-size: 18px; }
    .fig2 .lvl1 .under { line-height: 21px; border-bottom-width: 3px; }
    .fig2 .dlg { --ctl: 36px; --th: 49px; --tp: 15px; --ti: 25px; --tx: 18px; --lw: 50px; --lx: 10px; --fp: 7px; --ta: 60px; --pw: 54px; --pi: 32px; --fx: 8px; --lg: 0px; --bg: 8px; --mg: 26px; --bh: 39px; --bw: 36px;
      position: absolute; top: 23px; bottom: 0; left: calc(100% * 350 / 1094); right: 7px; border-width: 1px 1px 0; box-shadow: -2px 0 16px #0006; z-index: 1; }
    .fig2 .form { padding-right: 6px; }
    .fig2 fieldset { margin: 10px 7px 0; }
    .fig2 legend { padding: 0 10px; }
    .fig2 .list { height: 162px; margin: 8px 0 9px; }
    .fig2 .bar .menus { padding: 0 14px; }
    .fig2 .bar .wipe { background: #ccc; border-color: #c0c0c0; }
    .fig2 .rest { flex: 1; margin-top: 9px; border-bottom: 0; }
    .fig2 .d1 { left: calc(100% * 408 / 1094); top: 81px; width: calc(100% * 671 / 1094); height: 45px; }
    .fig2 .d2 { left: calc(100% * 350 / 1094); top: 384px; width: calc(100% * 728 / 1094); height: 340px; }

    /* cascading menus */
    .fig3, .fig5 { display: flex; flex-direction: column; background: linear-gradient(90deg, #fff 20%, #f0f0f0 90%); }
    .strip { display: flex; align-items: center; }
    .strip button.on { background: #fdfdfd; border-top: 4px solid #9c9c9c; border-left: 2px solid #ccc; }
    .cascade { display: flex; align-items: stretch; flex: 1; min-height: 0; }
    .menu { background: linear-gradient(90deg, #fff, #f0f0f0 20%); }
    .menu button { display: flex; align-items: center; justify-content: space-between; width: 100%; height: var(--mr); text-align: left; padding-bottom: 2px; }
    .menu button.sel { background: #0078d7; }
    .fig3 { --fs: 39px; --lh: 48px; --mr: 67px; margin: 9px 0 0 calc(100% * 249 / 1285); width: calc(100% * 940 / 1285); height: 475px; }
    .fig3 .strip { height: 63px; }
    .fig3 .strip button { height: 62px; padding: 2px 14px 0; margin-right: 28px; }
    .fig3 .strip button.on { padding: 0 15px 0 18px; margin-right: 24px; }
    .fig3 .first { width: calc(100% * 566 / 940); padding: 8px 5px 0 3px; border-top: 3px solid #fff; border-right: 5px solid #fff; }
    .fig3 .first button { padding: 0 16px 7px 72px; }
    .fig3 .first button.sel { height: 60px; margin-bottom: 7px; padding-bottom: 2px; }
    .fig3 .second { flex: 1; margin-top: 9px; border-top: 3px solid #fff; border-right: 3px solid #888; padding-top: 2px; }
    .fig3 .second button { padding-left: 76px; }
    .play { width: 20px; height: 24px; }

    .fig5 { --fs: 33px; --lh: 40px; --mr: 57px; margin: 1px 0 0 calc(100% * 242 / 1488); width: calc(100% * 1044 / 1488); height: 461px; }
    .fig5 .strip { margin: 10px 20px 0 0; height: 72px; border-right: 2px solid #b0b0b0; border-bottom: 2px solid #b0b0b0; border-top: 2px solid #f4f7fc; }
    .fig5 .strip button { height: 56px; padding: 0 12px; margin-right: 25px; }
    .fig5 .strip button.on { padding: 0 14px 0 7px; margin-right: 23px; border-left: 0; }
    .fig5 .first { width: calc(100% * 473 / 1044); padding: 3px 7px 0 0; margin-top: -8px; border-top: 3px solid #fff; border-right: 2px solid #888; position: relative; }
    .fig5 .first button { padding: 0 14px 2px 55px; }
    .fig5 .second { flex: 1; margin-top: 54px; border-top: 3px solid #fff; border-right: 4px solid #777; padding-top: 4px; }
    .fig5 .second button { padding-left: 64px; }
    .fig5 .play { width: 17px; height: 22px; }

    /* elastic property sheet */
    .fig4 { --fs: 24px; --lh: 30px; --ctl: 50px; --spin: 47px; --fx: 10px; --lg: 0px; --bg: 11px; --mg: 35px; --bh: 50px; --bw: 45px; --li: 39px;
      margin-left: calc(100% * 253 / 1285); width: calc(100% * 967 / 1285); height: 852px; padding: 0 1px 0 18px; background: linear-gradient(90deg, #fcfcfc, #e2e2e2 19px, #fff 20px); }
    .fig4 .dlg { border-width: 0 3px 0 2px; height: 860px; padding-top: 2px; }
    .fig4 .list { height: 207px; margin: 14px 0 10px; }
    .fig4 .props { margin-top: 15px; padding-bottom: 0; height: 520px; }
    .fig4 .rows { display: grid; grid-template-rows: 60px 48px 54px 64px 44px 50px; padding: 18px 10px 6px 12px; }
    .fig4 .data, .fig6 .data { margin: 0 10px 0 9px; padding-top: 15px; padding-bottom: 0; }
    .fig4 .data { height: 150px; }
    .fig4 .grid { height: 120px; }
    .fig4 th, .fig4 td { height: 42px; }
    .fig4 .d3 { left: calc(100% * 44 / 967); top: 763px; width: calc(100% * 892 / 967); height: 80px; }
    .c0 { width: 32px; } .c1 { width: 208px; } .c2 { width: 207px; }

    /* plastic dialog */
    .fig6 { --fs: 26px; --lh: 32px; --ctl: 50px; --spin: 50px; --th: 65px; --tp: 20px; --ti: 34px; --tx: 24px; --lw: 67px; --lx: 14px; --fp: 10px; --ta: 83px; --pw: 76px; --pi: 42px; --fx: 11px; --lg: 2px; --bg: 12px; --mg: 36px; --bh: 53px; --bw: 48px; --li: 42px;
      margin: 0 0 0 calc(100% * 261 / 1488); width: calc(100% * 1025 / 1488); height: 1020px; padding: 1px 11px 0 11px; background: linear-gradient(90deg, #f6f6f6, #d8d8d8 12px, #fff 13px, #fff 98%, #c4c4c4 99%, #e4e4e4); }
    .fig6 .dlg { height: 1030px; }
    .fig6 .behave { margin-top: 15px; }
    .fig6 .list { height: 221px; margin: 14px 0 11px; padding-top: 3px; }
    .fig6 .props { margin-top: 18px; padding-bottom: 0; height: 440px; }
    .fig6 .rows { display: grid; grid-template-rows: 64px 50px 52px 58px; padding: 18px 10px 9px 12px; --ctl: 54px; }
    .fig6 .sub { width: 184px; height: 50px; font-size: 24px; }
    .fig6 .spin { width: 128px; }
    .fig6 .data { height: 150px; }
    .fig6 .grid { height: 120px; }
    .fig6 th, .fig6 td { height: 44px; }
    .fig6 .c0 { width: 32px; } .fig6 .c1, .fig6 .c2 { width: 219px; }
    .cell { position: relative; }
    .edit { width: 100%; height: 42px; border: 2px solid #999; border-right: 3px solid #0078d7; border-bottom: 4px solid #0078d7; background: #fff; padding: 0 4px; display: block; outline: none; }
    .beam { position: absolute; left: 3px; top: 8px; width: 9px; height: 22px; }
    .fig6 .d4 { left: calc(100% * 67 / 1025); top: 926px; width: calc(100% * 897 / 1025); height: 80px; }
    .pointer { position: absolute; left: calc(100% * 763 / 1488); top: 1775px; width: 30px; height: 570px; z-index: 3; }

    .cap1 { margin: 5px 0 0 calc(100% * 278 / 1285); width: calc(100% * 930 / 1285); height: 122px; font-size: 73px; line-height: 80px; }
    .cap2 { margin: 121px 0 0 calc(100% * 9 / 1285); width: calc(100% * 830 / 1285); height: 133px; font-size: 83px; line-height: 90px; }
    .cap3 { margin: 43px 0 0 calc(100% * 241 / 1488); width: calc(100% * 1055 / 1488); height: 134px; font-size: 83px; line-height: 90px; }
    .noteA { left: calc(100% * 889 / 2773); top: 2079px; width: calc(100% * 507 / 2773); z-index: 3; }
    .noteB { left: calc(100% * 2187 / 2773); top: 2111px; width: calc(100% * 507 / 2773); z-index: 3; }
    .n1 { left: calc(100% * 266 / 2773); top: 313px; } .n2 { left: calc(100% * 132 / 2773); top: 1089px; }
    .n3 { left: calc(100% * 145 / 2773); top: 1588px; } .n4 { left: calc(100% * 1487 / 2773); top: 2332px; }
    .a1 { left: calc(100% * 1130 / 2773); top: 292px; width: 137px; height: 196px; }
    .a2 { left: calc(100% * 1067 / 2773); top: 857px; width: 193px; height: 184px; }
    .a3 { left: calc(100% * 1303 / 2773); top: 1712px; width: 119px; height: 173px; }
    .l1 { left: calc(100% * 893 / 2773); top: 869px; } .l2 { left: calc(100% * 1231 / 2773); top: 1613px; }
  `;

  private expander(open: boolean) {
    return html`<button class="exp" aria-label=${open ? "折りたたむ" : "展開"}>
      <svg viewBox="0 0 16 16"><path d=${open ? "M3 8h10" : "M3 8h10M8 3v10"} stroke="#2a4fa0" stroke-width="2" /></svg>
    </button>`;
  }

  private tree(count: number) {
    return html`<ul class="tree" role="tree">
      <li>
        <div class="row root">${this.expander(true)}${icon("model")}<span class="txt">モデル (1)</span></div>
        <ul class="lvl1">
          <li>
            <div class="row">${this.expander(true)}<span class="under">Model-1</span></div>
            <ul class="lvl2">
              ${CHILDREN.slice(0, count).map((item) => html`<li class="row">
                ${item.expandable ? this.expander(false) : html`<span class="conn"></span>`}
                ${icon(item.icon)}
                <span class=${classMap({ txt: true, sel: !!item.selected })}>${item.label}</span>
              </li>`)}
            </ul>
          </li>
        </ul>
      </li>
    </ul>`;
  }

  private combo(id: string, value: string, width: string, lead: unknown = nothing) {
    return html`<span class="combo" style="width:${width}">${lead}
      <select id=${id} aria-label=${value}><option>${value}</option></select>
      <span class="chev">${icon("chevron", "")}</span></span>`;
  }

  private spinner(id: string) {
    return html`<div class="line"><label for=${id}>場の変数の数:</label>
      <span class="spin"><input id=${id} type="number" value="0" />
        <div><button aria-label="増やす">▲</button><button aria-label="減らす">▼</button></div></span></div>`;
  }

  private check(id: string, text: string) {
    return html`<div class="line tick"><input type="checkbox" id=${id} /><label for=${id}>${text}</label></div>`;
  }

  private bar(off = false) {
    return html`<div class="bar">
      <div class="menus">${CATEGORIES.map((c) => html`<button>${c}</button>`)}</div>
      <button class="wipe" aria-label="消去">${icon(off ? "eraserOff" : "eraser")}</button>
    </div>`;
  }

  private subOptions() {
    return html`<button class="sub"><svg class="tri" viewBox="0 0 18 14"><path d="M0 0h18l-9 14z" /></svg>サブオプション</button>`;
  }

  private head(id: string, marked: boolean) {
    return html`<h2 class="title">${icon("app")}<span>材料特性の編集</span>
        <button class="close" aria-label="閉じる">${icon("close", "")}</button></h2>
      <div class="form">
        <label for="${id}-name">名前:</label>
        <div class="box"><input id="${id}-name" class=${marked ? "marked" : ""} value="Material-1" /></div>
        <label for="${id}-desc">説明:</label>
        <div class="desc"><textarea id="${id}-desc"></textarea><button aria-label="編集">${icon("pencil")}</button></div>
      </div>`;
  }

  private menu(cls: string, items: string[], active: number, arrows: boolean) {
    return html`<ul class="menu ${cls}">${items.map((text, i) => html`<li>
      <button class=${i === active ? "sel" : ""}>${text}
        ${arrows ? html`<svg class="play" viewBox="0 0 20 24"><path d="M1 0h4l15 12L5 24H1z" fill=${i === active ? "#fff" : "#000"} /></svg>` : nothing}
      </button></li>`)}</ul>`;
  }

  private strip() {
    return html`<div class="strip">${CATEGORIES.slice(1).map((c, i) => html`<button class=${i === 0 ? "on" : ""}>${c}</button>`)}</div>`;
  }

  private dash(cls: string) {
    return html`<svg class="dash ${cls}" aria-hidden="true"><rect width="100%" height="100%" /></svg>`;
  }

  render() {
    return html`<main class="board">
      <section class="col">
        <figure class="shot fig1">
          <div class="browser">
            <div class="tools">
              ${this.combo("db", "モデルデータベース", "370px", icon("database"))}
              <button class="tool" aria-label="並べ替え">${icon("updown")}</button>
              <button class="tool" aria-label="上へ">${icon("folder")}</button>
              <button class="tool" aria-label="構造">${icon("branch")}</button>
              <button class="tool" aria-label="ヒント">${icon("bulb")}</button>
            </div>
            ${this.tree(15)}
          </div>
          <div class="toolbox">
            ${TOOLS.map(([a, b], i) => html`
              ${a ? icon(a, i < 2 || i > 4 ? "icon tall" : "icon") : html`<span></span>`}${icon(b, b === "axes" ? "icon tall" : "icon")}`)}
            <div class="rule">${icon("partition", "icon tall")}${icon("split", "icon tall")}</div>
            ${icon("erasePart", "icon tall")}<span></span>
            <div class="rule">${icon("plus")}${icon("line", "icon tall")}</div>
          </div>
          <ul class="popup">
            <li><button><span>コンテキストの切り替え</span><span>Ctrl+Space</span></button></li>
            <li><button class="sel">作成...</button></li>
            <li><button><span>フィルタ...</span><span class="key">F2</span></button></li>
          </ul>
        </figure>
        <p class="caption cap1"><span>モデルの</span><strong>材料特性</strong><em>⇒作成</em></p>
        <p class="caption cap2"><em>機械的</em><strong>⇒弾性</strong><em>⇒</em><strong>弾性</strong></p>
        <figure class="shot clip fig3">
          ${this.strip()}
          <div class="cascade">
            ${this.menu("first", ["弾性", "塑性", "延性金属での損傷", "力-分離則での損傷", "繊維補強複合材での損傷", "エラストマの損傷"], 0, true)}
            ${this.menu("second", ["弾性", "超弾性", "発泡超弾性", "低密度発泡材", "亜弾性", "多孔質弾性"], 0, false)}
          </div>
        </figure>
        <figure class="shot clip fig4">
          <div class="dlg">
            <fieldset><legend>材料挙動</legend>
              <ul class="list"><li class="sel">弾性</li></ul>
              ${this.bar()}
            </fieldset>
            <fieldset class="props"><legend>弾性</legend>
              <div class="rows">
                <div class="line"><label for="type">タイプ:</label>${this.combo("type", "等方性", "320px")}${this.subOptions()}</div>
                ${this.check("temp1", "温度依存データを使用する")}
                ${this.spinner("vars1")}
                <div class="line"><label for="scale">弾性率の時間スケール (粘弾性):</label>${this.combo("scale", "長期", "101px")}</div>
                ${this.check("comp", "圧縮なし")}
                ${this.check("tens", "引張りなし")}
              </div>
              <fieldset class="data"><legend>データ</legend>
                <div class="grid"><table>
                  <colgroup><col class="c0" /><col class="c1" /><col class="c2" /></colgroup>
                  <tr><th></th><th>Young 率</th><th>Poisson 比</th></tr>
                  <tr><th>1</th><td>200000</td><td class="sel">0.3</td></tr>
                  <tr><th></th><td></td><td></td></tr>
                </table></div>
              </fieldset>
            </fieldset>
          </div>
          ${this.dash("d3")}
        </figure>
      </section>

      <section class="col">
        <figure class="shot fig2 clip">
          ${this.tree(22)}
          <div class="dlg">
            ${this.head("m1", true)}
            <fieldset><legend>材料挙動</legend>
              <ul class="list"></ul>
              ${this.bar(true)}
            </fieldset>
            <fieldset class="rest"></fieldset>
          </div>
          ${this.dash("thin d1")}${this.dash("d2")}
        </figure>
        <p class="mincho blue">名前は自分で決める(例：F10T，SM490)</p>
        <p class="mincho red">名前はわかり<br />やすいものに<br />しとくとよい</p>
        <p class="caption cap3"><span>機械的</span><strong>⇒塑性</strong><em>⇒</em><strong>金属塑性</strong></p>
        <figure class="shot clip fig5">
          ${this.strip()}
          <div class="cascade">
            ${this.menu("first", ["弾性", "塑性", "延性金属での損傷", "力-分離則での損傷", "繊維補強複合材での損傷", "エラストマの損傷", "変形理論 (全ひずみ) 塑性"], 1, true)}
            ${this.menu("second", ["金属塑性", "修正 Drucker-Prager/Cap 塑性", "鋳鉄塑性", "拡張 Cam-粘土塑性", "コンクリート損傷塑性", "コンクリートスミアドひび割れ"], 0, false)}
          </div>
        </figure>
        <figure class="shot clip fig6">
          <div class="dlg">
            ${this.head("m2", false)}
            <fieldset class="behave"><legend>材料挙動</legend>
              <ul class="list"><li>弾性</li><li class="sel">金属塑性</li></ul>
              ${this.bar()}
            </fieldset>
            <fieldset class="props"><legend>金属塑性</legend>
              <div class="rows">
                <div class="line"><label for="hard">硬化:</label>${this.combo("hard", "等方硬化", "221px")}${this.subOptions()}</div>
                ${this.check("rate", "ひずみ速度依存データを使用する")}
                ${this.check("temp2", "温度依存データを使用する")}
                ${this.spinner("vars2")}
              </div>
              <fieldset class="data"><legend>データ</legend>
                <div class="grid"><table>
                  <colgroup><col class="c0" /><col class="c1" /><col class="c2" /></colgroup>
                  <tr><th></th><th>降伏応力</th><th>塑性ひずみ</th></tr>
                  <tr><th>1</th><td class="cell"><input class="edit" aria-label="降伏応力" />
                    <svg class="beam" viewBox="0 0 9 22"><path d="M0 1h9M4 1v20M0 21h9" fill="none" stroke="#000" stroke-width="2" /></svg></td><td></td></tr>
                </table></div>
              </fieldset>
            </fieldset>
          </div>
          ${this.dash("d4")}
        </figure>
        <svg class="pointer" viewBox="0 0 30 570" aria-hidden="true">
          <path d="M1 0L13 545" stroke="#f00" stroke-width="2" /><path d="M0 541h27L14 570z" fill="#f00" />
        </svg>
      </section>

      <span class="num n1">①</span><span class="num n2">②</span><span class="num n3">③</span><span class="num n4">④</span>
      <p class="label l1">弾性</p>
      <p class="label l2">弾塑性</p>
      <p class="mincho note noteA">ヤング率,<br />ポアソン比を入力</p>
      <p class="mincho note noteB">降伏応力<br />塑性ひずみを入力</p>
      <svg class="arrow a1" viewBox="0 0 137 196"><path d="M0 49h69V0l68 98l-68 98v-48H0z" /></svg>
      <svg class="arrow a2" viewBox="0 0 193 184"><path d="M104 0l89 77l-58 69l44 38l-147 -8L0 31l45 38z" /></svg>
      <svg class="arrow a3" viewBox="0 0 119 173"><path d="M0 43h60V0l59 86l-59 87v-44H0z" /></svg>
    </main>`;
  }
}
